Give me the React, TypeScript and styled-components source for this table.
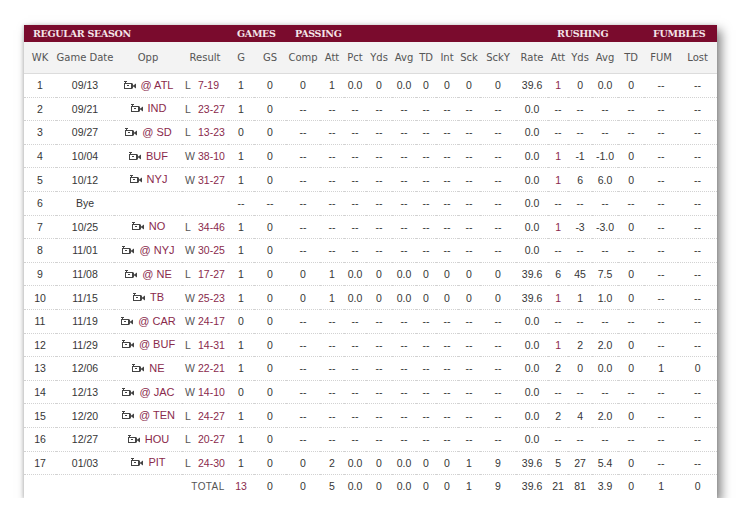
import React from "react";
import styled, { createGlobalStyle } from "styled-components";

const Global = createGlobalStyle`
  html, body { margin: 0; padding: 0; background: #ffffff; }
  body { font-family: "Liberation Sans", Arial, sans-serif; }
`;

const MAROON = "#7a0b2d";
const LINK = "#8a2a4c";

const Page = styled.div`
  padding: 25px 0 0 24px;
`;

const Card = styled.div`
  width: 693px;
  background: #fff;
  box-shadow: 4px 5px 10px rgba(0, 0, 0, 0.5), -1px 0 3px rgba(0, 0, 0, 0.15);
`;

const Table = styled.table`
  width: 693px;
  table-layout: fixed;
  border-collapse: separate;
  border-spacing: 0;
`;

const GroupCell = styled.th`
  background: ${MAROON};
  color: #f4e4e8;
  font-family: "DejaVu Serif", Georgia, serif;
  font-weight: 700;
  font-size: 9.5px;
  letter-spacing: -0.3px;
  text-align: left;
  padding: 0 0 0 9px;
  height: 17px;
  line-height: 17px;
  white-space: nowrap;
`;

const HeadCell = styled.th`
  background: #f3f3f3;
  color: #555;
  font-family: "DejaVu Sans", Verdana, sans-serif;
  font-weight: 400;
  font-size: 10px;
  text-align: center;
  padding: 0;
  height: 31px;
  border-bottom: 1px solid #dcdcdc;
  white-space: nowrap;
`;

const Cell = styled.td<{ $link?: boolean }>`
  color: ${(p) => (p.$link ? LINK : "#363636")};
  font-size: 10.5px;
  text-align: center;
  padding: 0;
  height: 22.6px;
  border-bottom: 1px dotted #d2d2d2;
  white-space: nowrap;
`;

const LastCell = styled(Cell)`
  border-bottom: none;
`;

const OppWrap = styled.span`
  display: inline-flex;
  align-items: center;
  gap: 3px;
`;

const TeamLink = styled.span`
  color: ${LINK};
  font-size: 11px;
`;

const ResultWrap = styled.div`
  display: flex;
  align-items: center;
  padding: 0 0 0 3px;
`;

const Outcome = styled.span`
  width: 13px;
  text-align: left;
  color: #555;
`;

const Score = styled.span`
  color: ${LINK};
`;

const TotalLabel = styled.span`
  color: #555;
  font-size: 10px;
  letter-spacing: 0.4px;
  padding-left: 6px;
`;

const TvIcon = () => (
  <svg width="15" height="10" viewBox="0 0 15 10" aria-hidden="true">
    <path d="M1 1.5h3M2.5 1.5v2" stroke="#444" strokeWidth="1" fill="none" />
    <rect x="1.5" y="3.5" width="7" height="5" stroke="#444" strokeWidth="1" fill="none" />
    <path d="M4 5.5h2" stroke="#444" strokeWidth="1" />
    <path d="M9.5 6l3.5-2.5v5z" fill="#444" />
    <path d="M9.5 3.5v5" stroke="#444" strokeWidth="1" />
  </svg>
);

const widths = [32, 58, 68, 46, 26, 32, 34, 24, 22, 26, 24, 20, 22, 22, 36, 32, 20, 24, 26, 26, 34, 39];
const heads = ["WK", "Game Date", "Opp", "Result", "G", "GS", "Comp", "Att", "Pct", "Yds", "Avg", "TD", "Int", "Sck", "SckY", "Rate", "Att", "Yds", "Avg", "TD", "FUM", "Lost"];

type Game = {
  wk: string;
  date: string;
  away?: boolean;
  opp?: string;
  res?: string;
  score?: string;
  stats: string[];
};

const D = "--";
const noPass = [D, D, D, D, D, D, D, D, D, "0.0"];
const noRush = [D, D, D, D];
const noFum = [D, D];

const games: Game[] = [
  { wk: "1", date: "09/13", away: true, opp: "ATL", res: "L", score: "7-19", stats: ["1", "0", "0", "1", "0.0", "0", "0.0", "0", "0", "0", "0", "39.6", "1", "0", "0.0", "0", ...noFum] },
  { wk: "2", date: "09/21", opp: "IND", res: "L", score: "23-27", stats: ["1", "0", ...noPass, ...noRush, ...noFum] },
  { wk: "3", date: "09/27", away: true, opp: "SD", res: "L", score: "13-23", stats: ["0", "0", ...noPass, ...noRush, ...noFum] },
  { wk: "4", date: "10/04", opp: "BUF", res: "W", score: "38-10", stats: ["1", "0", ...noPass, "1", "-1", "-1.0", "0", ...noFum] },
  { wk: "5", date: "10/12", opp: "NYJ", res: "W", score: "31-27", stats: ["1", "0", ...noPass, "1", "6", "6.0", "0", ...noFum] },
  { wk: "6", date: "Bye", stats: [D, D, ...noPass, ...noRush, ...noFum] },
  { wk: "7", date: "10/25", opp: "NO", res: "L", score: "34-46", stats: ["1", "0", ...noPass, "1", "-3", "-3.0", "0", ...noFum] },
  { wk: "8", date: "11/01", away: true, opp: "NYJ", res: "W", score: "30-25", stats: ["1", "0", ...noPass, ...noRush, ...noFum] },
  { wk: "9", date: "11/08", away: true, opp: "NE", res: "L", score: "17-27", stats: ["1", "0", "0", "1", "0.0", "0", "0.0", "0", "0", "0", "0", "39.6", "6", "45", "7.5", "0", ...noFum] },
  { wk: "10", date: "11/15", opp: "TB", res: "W", score: "25-23", stats: ["1", "0", "0", "1", "0.0", "0", "0.0", "0", "0", "0", "0", "39.6", "1", "1", "1.0", "0", ...noFum] },
  { wk: "11", date: "11/19", away: true, opp: "CAR", res: "W", score: "24-17", stats: ["0", "0", ...noPass, ...noRush, ...noFum] },
  { wk: "12", date: "11/29", away: true, opp: "BUF", res: "L", score: "14-31", stats: ["1", "0", ...noPass, "1", "2", "2.0", "0", ...noFum] },
  { wk: "13", date: "12/06", opp: "NE", res: "W", score: "22-21", stats: ["1", "0", ...noPass, "2", "0", "0.0", "0", "1", "0"] },
  { wk: "14", date: "12/13", away: true, opp: "JAC", res: "W", score: "14-10", stats: ["0", "0", ...noPass, ...noRush, ...noFum] },
  { wk: "15", date: "12/20", away: true, opp: "TEN", res: "L", score: "24-27", stats: ["1", "0", ...noPass, "2", "4", "2.0", "0", ...noFum] },
  { wk: "16", date: "12/27", opp: "HOU", res: "L", score: "20-27", stats: ["1", "0", ...noPass, ...noRush, ...noFum] },
  { wk: "17", date: "01/03", opp: "PIT", res: "L", score: "24-30", stats: ["1", "0", "0", "2", "0.0", "0", "0.0", "0", "0", "1", "9", "39.6", "5", "27", "5.4", "0", ...noFum] },
];

const totals = ["13", "0", "0", "5", "0.0", "0", "0.0", "0", "0", "1", "9", "39.6", "21", "81", "3.9", "0", "1", "0"];

const RUSH_ATT = 12;

export default function App() {
  return (
    <Page>
      <Global />
      <Card>
        <Table>
          <colgroup>
            {widths.map((w, i) => (
              <col key={i} style={{ width: w }} />
            ))}
          </colgroup>
          <thead>
            <tr>
              <GroupCell colSpan={4}>REGULAR SEASON</GroupCell>
              <GroupCell colSpan={2}>GAMES</GroupCell>
              <GroupCell colSpan={10}>PASSING</GroupCell>
              <GroupCell colSpan={4}>RUSHING</GroupCell>
              <GroupCell colSpan={2}>FUMBLES</GroupCell>
            </tr>
            <tr>
              {heads.map((h, i) => (
                <HeadCell key={i}>{h}</HeadCell>
              ))}
            </tr>
          </thead>
          <tbody>
            {games.map((g) => (
              <tr key={g.wk}>
                <Cell>{g.wk}</Cell>
                <Cell>{g.date}</Cell>
                <Cell>
                  {g.opp && (
                    <OppWrap>
                      <TvIcon />
                      <TeamLink>{g.away ? `@ ${g.opp}` : g.opp}</TeamLink>
                    </OppWrap>
                  )}
                </Cell>
                <Cell>
                  {g.res && (
                    <ResultWrap>
                      <Outcome>{g.res}</Outcome>
                      <Score>{g.score}</Score>
                    </ResultWrap>
                  )}
                </Cell>
                {g.stats.map((s, i) => (
                  <Cell key={i} $link={i === RUSH_ATT && s === "1"}>
                    {s}
                  </Cell>
                ))}
              </tr>
            ))}
            <tr>
              <LastCell />
              <LastCell />
              <LastCell />
              <LastCell>
                <TotalLabel>TOTAL</TotalLabel>
              </LastCell>
              {totals.map((s, i) => (
                <LastCell key={i} $link={i === 0}>
                  {s}
                </LastCell>
              ))}
            </tr>
          </tbody>
        </Table>
      </Card>
    </Page>
  );
}
